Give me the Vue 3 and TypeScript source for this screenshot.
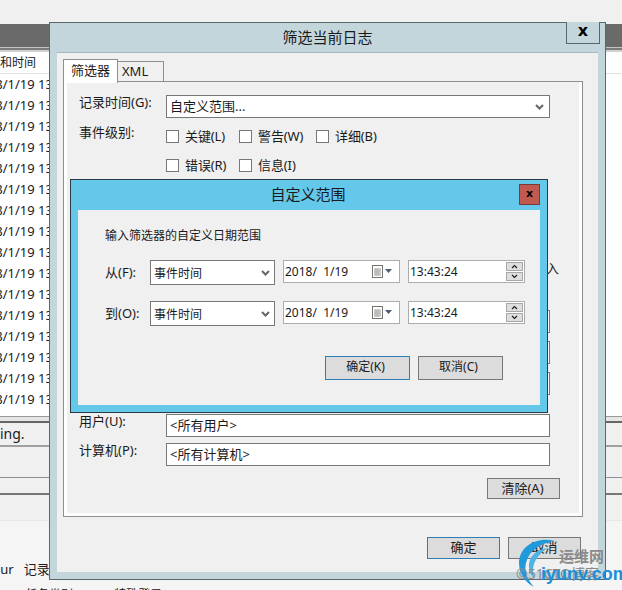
<script setup lang="ts">
const rows: string[] = Array.from({ length: 16 }, () => '2018/1/19 13:43:24')
const levelChecks: string[] = ['关键(L)', '警告(W)', '详细(B)', '错误(R)', '信息(I)']
const ranges: { label: string; time: string }[] = [
  { label: '从(F):', time: '13:43:24' },
  { label: '到(O):', time: '13:43:24' },
]
</script>

<template>
  <div class="screen">
    <div class="backdrop">
      <div class="bd-top"></div>
      <div class="bd-title"></div>
      <div class="bd-list">
        <div class="bd-head"><span>日期和时间</span></div>
        <div v-for="(r, i) in rows" :key="i" class="bd-row"><span>{{ r }}</span></div>
      </div>
      <div class="bd-info">
        <div class="bd-msg">ing.</div>
        <div class="bd-sec"></div>
        <div class="bd-sec2"></div>
        <div class="bd-sec3"></div>
      </div>
      <div class="bd-details">
        <div class="bd-line"><span class="cur">cur</span><span>记录时间(D):</span></div>
        <div class="bd-line second"><span>任务类别(Y):</span><span>特殊登录</span></div>
      </div>
    </div>

    <section class="filter-win">
      <h1 class="filter-title">筛选当前日志</h1>
      <button class="filter-close">x</button>
      <div class="filter-client">
        <div class="tabs">
          <div class="tab active">筛选器</div>
          <div class="tab">XML</div>
        </div>
        <div class="panel">
          <div class="panel-inner">
            <div class="row">
              <label class="lab">记录时间(G):</label>
              <div class="field">
                <span>自定义范围...</span>
                <svg class="chev" width="9" height="6" viewBox="0 0 9 6"><path d="M1 1l3.500 3.500L8 1" fill="none" stroke="#666" stroke-width="2" /></svg>
              </div>
            </div>
            <div class="row level">
              <label class="lab">事件级别:</label>
              <div class="checks">
                <div v-for="c in levelChecks" :key="c" class="check"><i class="box"></i><span>{{ c }}</span></div>
              </div>
            </div>
            <div class="note">包含/排除事件 ID: 输入</div>
            <div class="row r1"><div class="field spacer-field"></div></div>
            <div class="row r2"><div class="field spacer-field"></div></div>
            <div class="row r2"><div class="field spacer-field"></div></div>
            <div class="row r3">
              <label class="lab">用户(U):</label>
              <div class="field"><span>&lt;所有用户&gt;</span></div>
            </div>
            <div class="row r4">
              <label class="lab">计算机(P):</label>
              <div class="field"><span>&lt;所有计算机&gt;</span></div>
            </div>
            <div class="clear-row"><button class="btn clear">清除(A)</button></div>
          </div>
        </div>
        <div class="filter-foot">
          <button class="btn foot primary">确定</button>
          <button class="btn foot">取消</button>
        </div>
      </div>
    </section>

    <section class="range-win">
      <h2 class="range-title">自定义范围</h2>
      <button class="range-close">x</button>
      <div class="range-client">
        <p class="range-intro">输入筛选器的自定义日期范围</p>
        <div v-for="r in ranges" :key="r.label" class="range-row">
          <label class="range-lab">{{ r.label }}</label>
          <div class="range-select">
            <span>事件时间</span>
            <svg class="chev" width="9" height="6" viewBox="0 0 9 6"><path d="M1 1l3.500 3.500L8 1" fill="none" stroke="#666" stroke-width="2" /></svg>
          </div>
          <div class="range-box date">
            <span>2018/&nbsp;&nbsp;1/19</span>
            <svg class="cal" width="21" height="13" viewBox="0 0 21 13">
              <rect x="0.500" y="0.500" width="10" height="12" fill="#fff" stroke="#77736e" />
              <path d="M2 3h7v8H2z" fill="#d8d8d8" />
              <path d="M2 5h7M2 7h7M2 9h7M4 3v8M6 3v8" stroke="#aaa" stroke-width="0.700" />
              <path d="M13 4h7l-3.500 4z" fill="#4e5c7c" />
            </svg>
          </div>
          <div class="range-box time">
            <span>{{ r.time }}</span>
            <div class="spin">
              <div class="spin-btn"><svg width="7" height="5" viewBox="0 0 7 5"><path d="M1 4l2.500-2.500L6 4" fill="none" stroke="#222" stroke-width="1.200" /></svg></div>
              <div class="spin-btn"><svg width="7" height="5" viewBox="0 0 7 5"><path d="M1 1l2.500 2.500L6 1" fill="none" stroke="#222" stroke-width="1.200" /></svg></div>
            </div>
          </div>
        </div>
        <div class="range-foot">
          <button class="btn range-btn primary">确定(K)</button>
          <button class="btn range-btn">取消(C)</button>
        </div>
      </div>
    </section>

    <div class="mark">
      <svg class="swirl" width="44" height="50" viewBox="0 0 44 50">
        <path d="M38 3C20-2 2 8 2 25c0 11 7 20 15 24C10 41 7 33 9 25 12 12 24 5 38 3z" fill="#1f9bdc" />
        <path d="M31 10C18 11 11 20 12 30c.500 4 2 7 5 10-2-8-1-14 3-20 3-4 7-8 11-10z" fill="#4db4e6" />
      </svg>
      <span class="mark-cn">运维网</span>
      <span class="mark-sub">©51CTO博客</span>
      <span class="mark-en">iyunv.com</span>
    </div>
  </div>
</template>

<style scoped>
.screen {
  position: relative;
  width: 622px;
  height: 590px;
  overflow: hidden;
  background: #f4f4f4;
  color: #1a1a1a;
  font-family: "Noto Sans", "Noto Sans CJK SC", sans-serif;
  font-size: 13px;
}
.backdrop { display: flex; flex-direction: column; }
.bd-top { height: 24px; background: #f0f0f0; }
.bd-title {
  height: 28px;
  box-sizing: border-box;
  background: linear-gradient(#6a6a6a 0 23px, #c4c4c4 23px 24px, #7a7a7a 24px 26px, #d0d0d0 26px);
}
.bd-list { height: 364px; background: #fff; overflow: hidden; font-size: 13px; }
.bd-head {
  height: 21px;
  line-height: 21px;
  font-size: 12px;
  box-sizing: content-box;
  border-bottom: 1px solid #e2e2e2;
  white-space: nowrap;
}
.bd-head span { margin-left: -24px; }
.bd-row { height: 21px; line-height: 21px; white-space: nowrap; }
.bd-row span { margin-left: -27px; }
.bd-info { height: 104px; background: #f0f0f0; display: flex; flex-direction: column; }
.bd-msg {
  height: 22px;
  line-height: 22px;
  font-size: 14px;
  box-sizing: content-box;
  border-top: 1px solid #999;
  box-shadow: inset 0 4px 0 #e6e6e6, inset 0 6px 0 #666;
  padding-top: 6px;
}
.bd-sec { height: 31px; border-top: 2px solid #a0a0a0; }
.bd-sec2 { height: 16px; border-top: 1px solid #8e8e96; }
.bd-sec3 { height: 26px; border-top: 2px solid #777; }
.bd-details { flex: 1; border-top: 1px solid #e8e8e8; background: #f5f5f5; }
.bd-line { display: flex; gap: 10px; white-space: nowrap; margin-top: 39px; height: 18px; line-height: 18px; }
.bd-line.second { margin-top: 8px; padding-left: 25px; gap: 24px; font-size: 12px; }
.cur { font-size: 13px; margin-left: -6px; }

.filter-win {
  position: absolute;
  left: 49px;
  top: 22px;
  width: 557px;
  height: 558px;
  box-sizing: border-box;
  border: 1px solid #5d666c;
  background: #c3d6dc;
  padding: 29px 7px 7px;
}
.filter-title {
  position: absolute;
  left: 0;
  right: 0;
  top: 4px;
  margin: 0;
  text-align: center;
  font-size: 15px;
  font-weight: 400;
  line-height: 21px;
}
.filter-close {
  position: absolute;
  right: 5px;
  top: -1px;
  width: 34px;
  height: 22px;
  padding: 0 0 3px;
  border: 1px solid #5d666c;
  border-top: 0;
  background: #c3d6dc;
  font: 700 16px/16px "DejaVu Sans", sans-serif;
  color: #000;
}
.filter-client {
  height: 100%;
  box-sizing: border-box;
  background: #f0f0f0;
  border-top: 1px solid #a9b6c0;
  padding: 6px 15px 0 6px;
}
.tabs { display: flex; align-items: flex-start; margin-bottom: -2px; position: relative; z-index: 1; height: 24px; }
.tab {
  box-sizing: border-box;
  margin-top: 2px;
  width: 46px;
  height: 21px;
  border: 1px solid #8f8f8f;
  border-left: 0;
  background: #f0f0f0;
  line-height: 19px;
  padding-left: 4px;
}
.tab.active {
  margin-top: 0;
  width: 55px;
  height: 24px;
  border-left: 1px solid #8f8f8f;
  border-bottom: 0;
  background: #fff;
  line-height: 20px;
  padding-left: 7px;
}
.panel {
  height: 436px;
  box-sizing: border-box;
  border: 1px solid #8f8f8f;
  background: #fff;
}
.panel-inner {
  box-sizing: border-box;
  margin: 0 3px;
  height: 431px;
  background: #f0f0f0;
  padding: 13px 29px 0 12px;
}
.row { display: flex; align-items: flex-start; }
.lab { width: 87px; flex: none; line-height: 16px; white-space: nowrap; margin-top: -1px; }
.field {
  flex: 1;
  height: 23px;
  box-sizing: border-box;
  border: 1px solid #777;
  background: #fff;
  line-height: 21px;
  padding: 0 3px;
  display: flex;
  align-items: center;
  justify-content: space-between;
  white-space: nowrap;
}
.chev { margin-right: 2px; flex: none; }
.level { margin-top: 7px; height: 47px; }
.checks { display: grid; grid-template-columns: 73px 77px auto; row-gap: 16px; padding-top: 5px; justify-content: start; }
.check { display: flex; align-items: center; gap: 6px; height: 13px; white-space: nowrap; }
.check span { margin-top: -2px; letter-spacing: -0.100px; }
.box { width: 13px; height: 13px; box-sizing: border-box; border: 1px solid #777; background: #fff; flex: none; }
.note { margin-top: 88px; margin-right: -9px; height: 16px; line-height: 16px; text-align: right; white-space: nowrap; }
.spacer-field { margin-left: 87px; }
.r1 { margin-top: 34px; }
.r2 { margin-top: 8px; }
.r3 { margin-top: 19px; }
.r4 { margin-top: 6px; }
.clear-row { display: flex; justify-content: flex-end; margin: 12px -10px 0 0; }
.btn {
  box-sizing: border-box;
  border: 1px solid #777;
  background: #dcdcdc;
  font: inherit;
  color: #1a1a1a;
  padding: 0;
}
.btn.primary { border-color: #2f7db5; }
.clear { width: 73px; height: 21px; line-height: 17px; padding-right: 2px; }
.filter-foot { display: flex; justify-content: flex-end; gap: 8px; margin: 20px 2px 0 0; }
.foot { width: 73px; height: 22px; line-height: 18px; padding-bottom: 2px; }

.range-win {
  position: absolute;
  left: 70px;
  top: 179px;
  width: 478px;
  height: 234px;
  box-sizing: border-box;
  border: 1px solid #2c3a44;
  background: #64c8eb;
  padding: 30px 7px 7px;
}
.range-title {
  position: absolute;
  left: 0;
  right: 0;
  top: 4px;
  margin: 0;
  padding-right: 2px;
  text-align: center;
  font-size: 15px;
  font-weight: 400;
  line-height: 21px;
}
.range-close {
  position: absolute;
  right: 7px;
  top: 4px;
  width: 21px;
  height: 21px;
  padding: 0 0 3px;
  border: 1px solid #7a3a38;
  background: #c05a50;
  color: #000;
  font: 700 11px/11px "DejaVu Sans", sans-serif;
}
.range-client {
  height: 100%;
  box-sizing: border-box;
  background: #f0f0f0;
  padding: 18px 0 0 27px;
  font-size: 12px;
}
.range-intro { margin: 0 0 16px; line-height: 16px; white-space: nowrap; }
.range-row { display: flex; gap: 8px; margin-bottom: 16px; height: 25px; }
.range-lab { width: 37px; font-size: 13px; line-height: 24px; white-space: nowrap; }
.range-select {
  width: 125px;
  height: 25px;
  box-sizing: border-box;
  border: 1px solid #777;
  background: #fff;
  padding: 0 2px 0 3px;
  display: flex;
  align-items: center;
  justify-content: space-between;
}
.range-box {
  width: 117px;
  height: 23px;
  box-sizing: border-box;
  border: 1px solid #adadad;
  background: #fff;
  padding: 0 1px;
  display: flex;
  align-items: center;
  justify-content: space-between;
  white-space: nowrap;
}
.cal { margin-right: 5px; }
.spin { display: flex; flex-direction: column; gap: 1px; }
.spin-btn {
  width: 17px;
  height: 9px;
  box-sizing: border-box;
  border: 1px solid #a8a8a8;
  background: #dedede;
  display: flex;
  align-items: center;
  justify-content: center;
}
.range-foot { display: flex; gap: 8px; margin: 30px 0 0 220px; }
.range-btn { width: 85px; height: 24px; line-height: 20px; padding: 0 4px 2px 0; }

.mark { position: absolute; inset: 0; pointer-events: none; }
.swirl { position: absolute; left: 517px; top: 538px; }
.mark-cn { position: absolute; left: 559px; top: 546px; font-size: 15px; font-weight: 700; color: #8a8a8a; line-height: 20px; }
.mark-sub { position: absolute; left: 516px; top: 565px; font-size: 14px; color: #8a8a8a; line-height: 18px; white-space: nowrap; }
.mark-en { position: absolute; left: 541px; top: 564px; font: 700 18px/21px "Liberation Sans", sans-serif; color: #1e8fd6; white-space: nowrap; }
</style>
